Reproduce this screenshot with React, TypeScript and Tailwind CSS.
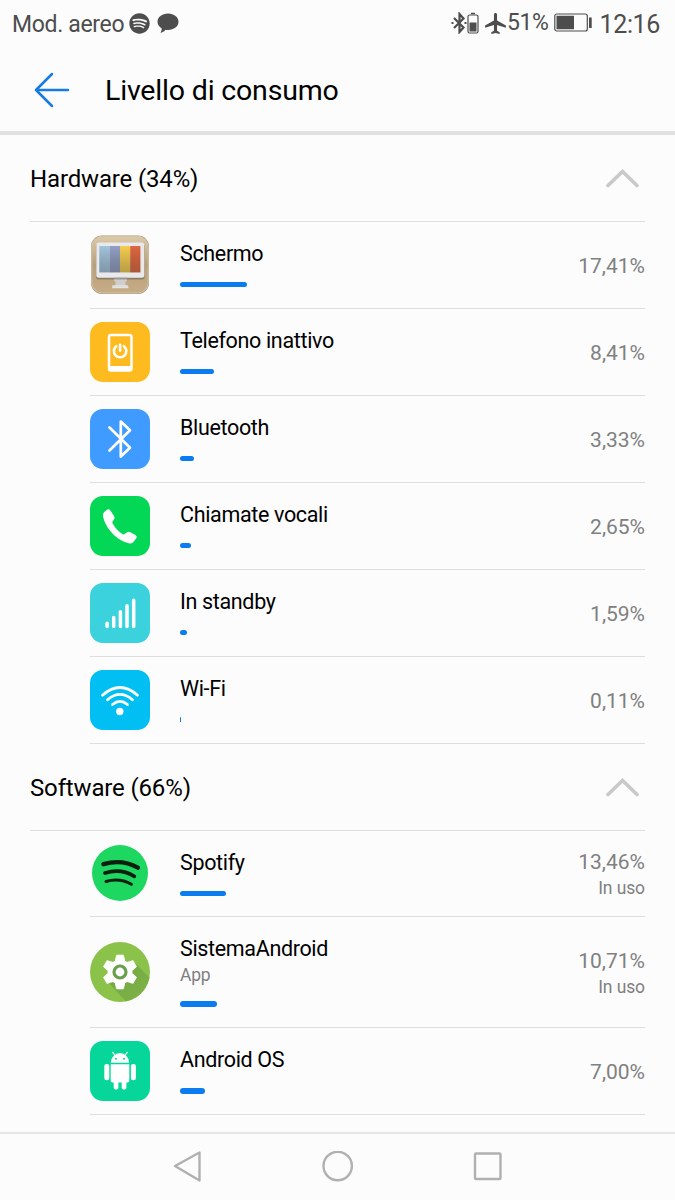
import type { ReactNode } from 'react';
import { FaSpotify } from 'react-icons/fa';
import { MdLocalAirport } from 'react-icons/md';

interface UsageItem {
  name: string;
  note?: string;
  percent: string;
  inUse?: boolean;
  bar: number;
  icon: ReactNode;
}

function Tile({ color, children }: { color: string; children: ReactNode }) {
  return (
    <svg viewBox="0 0 60 60" className="w-[60px] h-[60px]" fill="none">
      <rect width="60" height="60" rx="13" fill={color} />
      {children}
    </svg>
  );
}

function ScreenIcon() {
  return (
    <svg viewBox="0 0 60 60" className="w-[60px] h-[60px]">
      <defs>
        <linearGradient id="wood" x1="0" y1="0" x2="0" y2="1">
          <stop offset="0" stopColor="#dccaa8" />
          <stop offset="0.5" stopColor="#b89f7c" />
          <stop offset="1" stopColor="#c6ad86" />
        </linearGradient>
        <linearGradient id="shade" x1="0" y1="0" x2="0" y2="1">
          <stop offset="0" stopColor="#000" stopOpacity="0" />
          <stop offset="1" stopColor="#303030" stopOpacity="0.3" />
        </linearGradient>
      </defs>
      <rect x="1" y="0.5" width="58" height="58.5" rx="11" fill="#a8957c" />
      <rect x="1.8" y="1.2" width="56.4" height="56.8" rx="10.5" fill="url(#wood)" stroke="#d5c5aa" strokeWidth="1" />
      <rect x="6" y="9" width="48.6" height="35.5" rx="2.5" fill="#8e7c66" />
      <rect x="6.3" y="7.5" width="48" height="35.2" rx="2.5" fill="#e9e9ec" />
      <rect x="9.3" y="11" width="10.5" height="26.4" fill="#a3c4dc" />
      <rect x="19.8" y="11" width="10.2" height="26.4" fill="#929fc5" />
      <rect x="30" y="11" width="10.2" height="26.4" fill="#f5ce50" />
      <rect x="40.2" y="11" width="10.2" height="26.4" fill="#df6840" />
      <rect x="9.3" y="11" width="41.1" height="26.4" fill="url(#shade)" />
      <path d="M24 42.7h13v3l-1.5 1v4.3h-10v-4.3l-1.5-1z" fill="#d0cecc" />
      <path d="M24 42.7h13v1.8H24z" fill="#9a9794" />
      <path d="M22.5 50.3h15.5l.5 3h-16.5z" fill="#e2e1df" />
    </svg>
  );
}

const idleIcon = (
  <Tile color="#febb1f">
    <rect x="19" y="13" width="22.5" height="35.5" rx="2" stroke="#fff" strokeWidth="2.5" />
    <path d="M19 44h22.5v4H19z" fill="#fff" />
    <path d="M26.3 24.2a6.2 6.2 0 1 0 7.6 0M30.1 22.8v5.8" stroke="#fff" strokeWidth="2.6" strokeLinecap="round" />
  </Tile>
);

const bluetoothIcon = (
  <Tile color="#3f9bff">
    <path
      d="M19.5 18.5L40 38.8L30.8 47.5V12.5L40 21.3L19.5 41.5"
      stroke="#fff"
      strokeWidth="2.7"
      strokeLinecap="round"
      strokeLinejoin="round"
    />
  </Tile>
);

const phoneIcon = (
  <Tile color="#02d756">
    <path
      d="M17 13.8Q19 12.5 20.2 14.3L24 20Q25.3 22 24 23.600L22.5 25.500Q22 26.500 22.700 27.600Q26 34 32.300 38Q33.500 38.800 34.600 38L36.800 36.400Q38.500 35.300 40.200 36.200L45.500 39.100Q47.500 40.400 46.400 42L43.500 46Q42 47.800 39.500 47.400C27 45 15 32 13 20Q12.600 17.500 14.200 16Z"
      fill="#fff"
    />
  </Tile>
);

const standbyIcon = (
  <Tile color="#3bd1dd">
    <path
      d="M17.1 40.2v3.2M23.7 34.600v8.800M30.400 28.800v14.600M37 22.800v20.600M43.700 17.300v26.100"
      stroke="#fff"
      strokeWidth="3.5"
      strokeLinecap="round"
    />
  </Tile>
);

const wifiIcon = (
  <Tile color="#01bff2">
    <path
      d="M12.5 25.2Q30 9.8 47.5 25.2M17.5 29.8Q30 19 42.5 29.8M22.5 34.5Q30 28.300 37.5 34.5"
      stroke="#fff"
      strokeWidth="2.8"
      strokeLinecap="round"
    />
    <circle cx="29.8" cy="41.5" r="3.7" fill="#fff" />
  </Tile>
);

const spotifyIcon = (
  <svg viewBox="0 0 60 60" className="w-[60px] h-[60px]" fill="none" stroke="#0a1f10" strokeLinecap="round">
    <circle cx="30" cy="30" r="28" fill="#1ed760" stroke="none" />
    <path d="M13.4 21.2Q32 15.8 47.800 24.600" strokeWidth="4.4" />
    <path d="M15 30Q31 25.200 44.300 33.400" strokeWidth="3.7" />
    <path d="M16 38.500Q29.500 34.600 41.400 41.300" strokeWidth="3" />
  </svg>
);

const systemIcon = (
  <svg viewBox="0 0 60 60" className="w-[60px] h-[60px]">
    <defs>
      <clipPath id="disc">
        <circle cx="30" cy="30" r="30" />
      </clipPath>
      <linearGradient id="cast" x1="0.3" y1="0.3" x2="0.8" y2="0.8">
        <stop offset="0" stopColor="#77ab45" />
        <stop offset="1" stopColor="#83b847" />
      </linearGradient>
    </defs>
    <g clipPath="url(#disc)">
      <rect width="60" height="60" fill="#8bc34a" />
      <path d="M45 21L75 51L55 80L17 39Z" fill="url(#cast)" />
    </g>
    <g fill="#fff" stroke="#fff" strokeWidth="1" strokeLinejoin="round">
      <circle cx="30" cy="30" r="12" />
      {[0, 60, 120, 180, 240, 300].map((angle) => (
        <path key={angle} d="M26.6 13.200h6.800l1.500 7h-9.800z" transform={`rotate(${angle} 30 30)`} />
      ))}
    </g>
    <circle cx="30" cy="30" r="6" fill="#fff" stroke="#689f48" strokeWidth="3.2" />
  </svg>
);

const androidIcon = (
  <Tile color="#06d69a">
    <g fill="#fff">
      <path d="M20.8 21.8a9.2 9.700 0 0 1 18.400 0z" />
      <path d="M20.7 23.200h18.600v16.500q0 1.700-1.700 1.700H22.400q-1.700 0-1.700-1.700z" />
      <rect x="14.3" y="23" width="5" height="16.3" rx="2.3" />
      <rect x="40.9" y="23" width="5" height="16.3" rx="2.3" />
      <rect x="23.7" y="38" width="4.7" height="10.4" rx="2" />
      <rect x="31.7" y="38" width="4.7" height="10.4" rx="2" />
    </g>
    <path d="M22.7 11.300l2.500 3.200M37.300 11.300l-2.500 3.200" stroke="#fff" strokeWidth="1.2" strokeLinecap="round" />
    <circle cx="26" cy="17.7" r="1" fill="#06d69a" />
    <circle cx="34" cy="17.7" r="1" fill="#06d69a" />
  </Tile>
);

const hardware: UsageItem[] = [
  { name: 'Schermo', percent: '17,41%', bar: 67, icon: <ScreenIcon /> },
  { name: 'Telefono inattivo', percent: '8,41%', bar: 34, icon: idleIcon },
  { name: 'Bluetooth', percent: '3,33%', bar: 14, icon: bluetoothIcon },
  { name: 'Chiamate vocali', percent: '2,65%', bar: 10.5, icon: phoneIcon },
  { name: 'In standby', percent: '1,59%', bar: 7, icon: standbyIcon },
  { name: 'Wi-Fi', percent: '0,11%', bar: 0.6, icon: wifiIcon },
];

const software: UsageItem[] = [
  { name: 'Spotify', percent: '13,46%', inUse: true, bar: 46, icon: spotifyIcon },
  { name: 'SistemaAndroid', note: 'App', percent: '10,71%', inUse: true, bar: 37, icon: systemIcon },
  { name: 'Android OS', percent: '7,00%', bar: 24.5, icon: androidIcon },
];

function StatusBar() {
  return (
    <div className="h-[46px] flex items-center pl-3 pr-[15px] text-[#4d4d4d]">
      <span className="text-[23px] leading-none tracking-[-0.33px] relative top-px">Mod. aereo</span>
      <FaSpotify className="w-[21px] h-[21px] ml-[5px]" />
      <svg viewBox="0 0 22 22" className="w-[22px] h-[22px] ml-[7px]" fill="currentColor">
        <path d="M11 1.5c6 0 10.500 3.600 10.500 8.300S17 18 11 18c-.9 0-1.700 0-2.500-.2-1.300 1.700-3 2.700-5.200 3 1-1.300 1.500-2.800 1.400-4.400C2.200 14.900.5 12.500.5 9.800.5 5.100 5 1.500 11 1.500z" />
      </svg>
      <svg viewBox="0 0 16 22" className="w-4 h-[22px] ml-auto" fill="none" stroke="currentColor" strokeWidth="2.2">
        <path d="M3 6l9.500 9.500L8.500 20V2l4 4.500L3 16" />
        <path d="M.5 11h2M13.500 11h2" />
      </svg>
      <svg viewBox="0 0 12 22" className="w-3 h-[22px]" fill="none" stroke="currentColor">
        <rect x="1" y="3" width="10" height="18" rx="1.5" strokeWidth="1.2" />
        <path d="M4 1.500h4" strokeWidth="1.5" />
        <path d="M2.500 10.500h7v9h-7z" fill="currentColor" stroke="none" />
      </svg>
      <MdLocalAirport className="w-[25px] h-[25px] ml-[4px] -mr-px" />
      <span className="text-[23px] leading-none tracking-[-0.4px] relative -top-px">51%</span>
      <svg viewBox="0 0 39 20" className="w-[39px] h-5 ml-[6px]" fill="none">
        <rect x=".8" y="1" width="32.5" height="17" rx="2" stroke="currentColor" strokeWidth="1.2" />
        <path d="M2.500 2.800h17.500v13.500H2.500zM35 4.500h2.700v10.500H35z" fill="currentColor" />
      </svg>
      <span className="text-[25px] leading-none tracking-[-0.35px] ml-[6px] relative top-px">12:16</span>
    </div>
  );
}

function UsageRow({ item }: { item: UsageItem }) {
  return (
    <div
      className={`ml-[90px] mr-[30px] flex items-center border-b border-[#dedede] ${
        item.note ? 'h-[111px]' : 'h-[86.95px]'
      }`}
    >
      {item.icon}
      <div className="ml-[30px] flex-1 self-start pt-[18px]">
        <div className="text-[21.5px] leading-7 tracking-[-0.34px] text-black">{item.name}</div>
        {item.note && <div className="text-[17.5px] leading-6 tracking-[-0.2px] text-[#808080]">{item.note}</div>}
        <div className="mt-[14px] h-[5.5px] rounded-full bg-[#0a7cf0]" style={{ width: item.bar }} />
      </div>
      <div className="pt-[2px] text-right text-[#808080]">
        <div className="text-[21px] leading-7">{item.percent}</div>
        {item.inUse && <div className="text-[17.5px] leading-6 tracking-[-0.1px]">In uso</div>}
      </div>
    </div>
  );
}

function Section({ title, items }: { title: string; items: UsageItem[] }) {
  return (
    <section>
      <div className="mx-[30px] h-[86.95px] flex items-center justify-between border-b border-[#dedede]">
        <h2 className="pt-[3px] text-[24px] leading-8 tracking-[-0.15px] text-black">{title}</h2>
        <svg viewBox="0 0 34 22" className="w-[34px] h-[22px] mr-[6px]" fill="none">
          <path d="M3 18.5L17.500 4.500L32 18.500" stroke="#c9c9c9" strokeWidth="3.6" strokeLinecap="round" />
        </svg>
      </div>
      {items.map((item) => (
        <UsageRow key={item.name} item={item} />
      ))}
    </section>
  );
}

export default function App() {
  return (
    <div className="w-[675px] h-[1200px] flex flex-col overflow-hidden bg-[#fcfcfc] font-[Roboto,sans-serif]">
      <StatusBar />
      <header className="h-[89px] shrink-0 flex items-center pl-[34px] border-b-4 border-[#e0e0e0]">
        <svg viewBox="0 0 36 36" className="w-9 h-9 mt-[2px]" fill="none">
          <path
            d="M18 2L2 18L18 34M2 18H34"
            stroke="#167ce4"
            strokeWidth="2.5"
            strokeLinecap="round"
            strokeLinejoin="round"
          />
        </svg>
        <h1 className="ml-[35px] pt-[5px] text-[28.5px] leading-9 tracking-[-0.18px] text-black">Livello di consumo</h1>
      </header>
      <main className="flex-1 min-h-0 overflow-hidden">
        <Section title="Hardware (34%)" items={hardware} />
        <Section title="Software (66%)" items={software} />
      </main>
      <nav className="h-[68px] shrink-0 flex items-center justify-center gap-[118px] border-t-2 border-[#e6e6e6]">
        <svg viewBox="0 0 32 32" className="w-8 h-8" fill="none" stroke="#b0b0b0" strokeWidth="2.4">
          <path d="M3 15L27.5 1.500V29.500Z" strokeLinejoin="round" />
        </svg>
        <svg viewBox="0 0 32 32" className="w-8 h-8" fill="none" stroke="#b0b0b0" strokeWidth="2.4">
          <circle cx="15.7" cy="15" r="14.2" />
        </svg>
        <svg viewBox="0 0 32 32" className="w-8 h-8" fill="none" stroke="#b0b0b0" strokeWidth="2.4">
          <rect x="3" y="2.5" width="25.5" height="25.500" rx="1" />
        </svg>
      </nav>
    </div>
  );
}
